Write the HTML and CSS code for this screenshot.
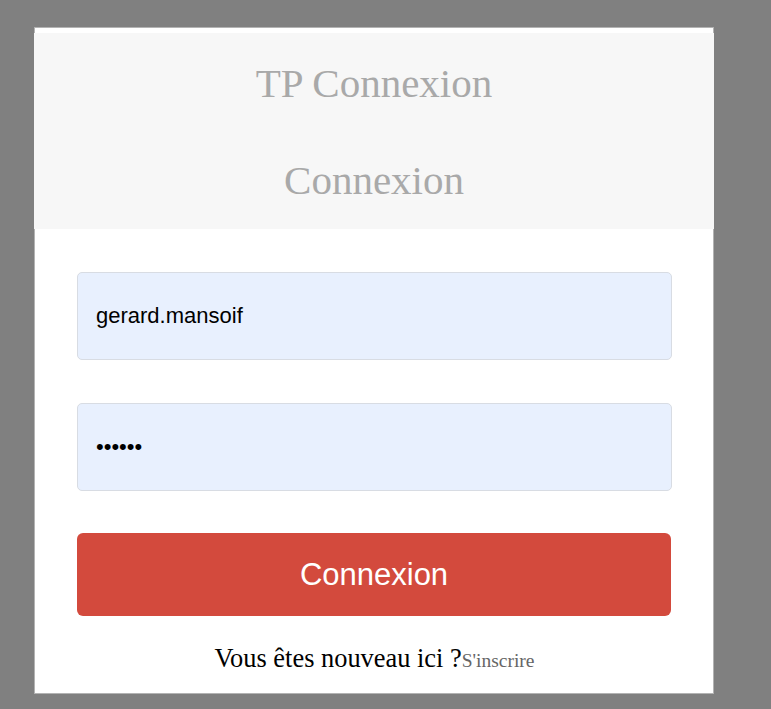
FILE: index.html
```html
<!DOCTYPE html>
<html lang="fr">
<head>
<meta charset="utf-8">
<title>TP Connexion</title>
<link rel="stylesheet" href="styles.css">
</head>
<body>
<div class="card">
  <header class="card-header">
    <h1 class="title">TP Connexion</h1>
    <h2 class="subtitle">Connexion</h2>
  </header>
  <form class="form">
    <input class="field" type="text" value="gerard.mansoif">
    <input class="field" type="password" value="123456">
    <button class="submit" type="button">Connexion</button>
    <p class="signup">Vous êtes nouveau ici ?<a class="signup-link" href="#">S'inscrire</a></p>
  </form>
</div>
</body>
</html>
```
FILE: styles.css
```css
html, body {
  margin: 0;
  padding: 0;
  background: #808080;
}
body {
  padding-top: 27px;
  font-family: "Liberation Serif", "Times New Roman", serif;
}
.card {
  width: 678px;
  margin-left: 34px;
  background: #fff;
  border: 1px solid #b3b3b3;
  padding-top: 5px;
}
.card-header {
  margin: 0 -1px;
  background: #f7f7f7;
  display: flex;
  flex-direction: column;
  align-items: center;
  padding: 27px 0 26px;
}
.title, .subtitle {
  margin: 0;
  font-family: "Liberation Serif", "Times New Roman", serif;
  font-weight: normal;
  font-size: 41px;
  line-height: 46px;
  color: #a9a9a9;
}
.subtitle {
  margin-top: 51px;
}
.form {
  display: flex;
  flex-direction: column;
  padding: 43px 41px 0 42px;
  margin: 0;
}
.field {
  box-sizing: border-box;
  width: 100%;
  height: 88px;
  margin: 0 0 43px;
  padding: 0 18px;
  border: 1px solid #d8dce3;
  border-radius: 5px;
  background: #e8f0fe;
  font-family: "Liberation Sans", Arial, sans-serif;
  font-size: 22px;
  color: #000;
  outline: none;
}
.field + .field {
  margin-bottom: 42px;
}
.submit {
  box-sizing: border-box;
  width: 594px;
  height: 83px;
  border: none;
  border-radius: 6px;
  background: #d34a3d;
  color: #fff;
  font-family: "Liberation Sans", Arial, sans-serif;
  font-size: 31px;
  padding: 0;
}
.signup {
  margin: 27px 0 0;
  padding-bottom: 17px;
  text-align: center;
  font-size: 26.4px;
  line-height: 30px;
  color: #000;
}
.signup-link {
  font-size: 19.5px;
  color: #666;
  text-decoration: none;
}
```
